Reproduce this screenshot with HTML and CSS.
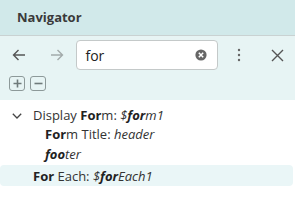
FILE: index.html
```html
<!DOCTYPE html>
<html>
<head>
<meta charset="utf-8">
<link rel="stylesheet" href="styles.css">
</head>
<body>
<div class="panel">
  <div class="header">Navigator</div>
  <div class="toolbar">
    <div class="controls">
      <button class="btn" aria-label="Back">
        <svg width="14" height="12" viewBox="0 0 14 12"><path d="M13 6H1.5M6.5 1L1.5 6l5 5" fill="none" stroke="#555" stroke-width="1.4"/></svg>
      </button>
      <button class="btn" aria-label="Forward">
        <svg width="14" height="12" viewBox="0 0 14 12"><path d="M1 6h11.5M7.5 1l5 5-5 5" fill="none" stroke="#a3aaaa" stroke-width="1.4"/></svg>
      </button>
      <div class="search">
        <span class="query">for</span>
        <svg class="clear" width="12" height="12" viewBox="0 0 12 12"><circle cx="6" cy="6" r="5.6" fill="#666"/><path d="M3.8 3.8l4.4 4.4M8.2 3.8L3.8 8.2" stroke="#fff" stroke-width="1.5"/></svg>
      </div>
      <button class="btn" aria-label="More">
        <svg width="4" height="14" viewBox="0 0 4 14"><circle cx="2" cy="2" r="1.2" fill="#666"/><circle cx="2" cy="7" r="1.2" fill="#666"/><circle cx="2" cy="12" r="1.2" fill="#666"/></svg>
      </button>
      <button class="btn" aria-label="Close">
        <svg width="13" height="13" viewBox="0 0 13 13"><path d="M1 1l11 11M12 1L1 12" stroke="#555" stroke-width="1.4"/></svg>
      </button>
    </div>
    <div class="expanders">
      <span class="box"><svg width="9" height="9" viewBox="0 0 9 9"><path d="M4.5 0.5v8M0.5 4.5h8" stroke="#6f7b7b" stroke-width="1.6"/></svg></span>
      <span class="box"><svg width="9" height="9" viewBox="0 0 9 9"><path d="M0.5 4.5h8" stroke="#6f7b7b" stroke-width="1.6"/></svg></span>
    </div>
  </div>
  <div class="tree">
    <div class="row r1">
      <svg class="chev" width="10" height="6" viewBox="0 0 10 6"><path d="M0.8 0.8l4.2 4.2 4.2-4.2" fill="none" stroke="#444" stroke-width="1.3"/></svg>
      <span>Display <b>For</b>m: <i>$<b>for</b>m1</i></span>
    </div>
    <div class="row r2 child"><span><b>For</b>m Title: <i>header</i></span></div>
    <div class="row r3 child"><span><i><b>foo</b>ter</i></span></div>
    <div class="row r4 selected"><span><b>For</b> Each: <i>$<b>for</b>Each1</i></span></div>
  </div>
</div>
</body>
</html>
```
FILE: styles.css
```css
* { box-sizing: border-box; }
html, body { margin: 0; padding: 0; background: #fff; }
body { font-family: "Open Sans", "Noto Sans", sans-serif; color: #333; width: 295px; height: 204px; overflow: hidden; }
.panel { width: 295px; height: 204px; display: flex; flex-direction: column; }
.header {
  height: 36px; background: #d1e9ea; border-bottom: 1px solid #c9d2d2;
  padding-left: 17px; font-weight: 700; font-size: 13px; line-height: 35px; color: #3a3a3a;
}
.toolbar { height: 64px; background: #e7f4f4; padding-top: 4px; }
.controls { display: flex; align-items: center; height: 30px; padding-left: 1px; gap: 2px; }
.btn { width: 36px; height: 30px; border: 0; background: none; padding: 0; display: flex; align-items: center; justify-content: center; }
.search {
  width: 142px; height: 30px; background: #fff; border: 1px solid #c4c9c9; border-radius: 4px;
  display: flex; align-items: center; justify-content: space-between; padding: 0 10px 0 8px; margin-right: 2px;
}
.query { font-size: 14px; color: #222; }
.expanders { display: flex; gap: 5px; padding: 6px 0 0 9px; }
.box { width: 16px; height: 15px; border: 1.5px solid #8d9999; border-radius: 3px; display: flex; align-items: center; justify-content: center; }
.tree { font-size: 13px; padding-top: 5px; }
.row { display: flex; align-items: center; position: relative; padding-left: 33px; }
.row b { font-weight: 700; color: #222; }
.chev { position: absolute; left: 12px; top: 8px; }
.r1 { height: 20px; }
.r2 { height: 18px; }
.r3 { height: 22px; }
.child { padding-left: 45px; }
.selected { height: 21px; margin-right: 2px; background: #eaf6f7; border-radius: 4px; }
```
